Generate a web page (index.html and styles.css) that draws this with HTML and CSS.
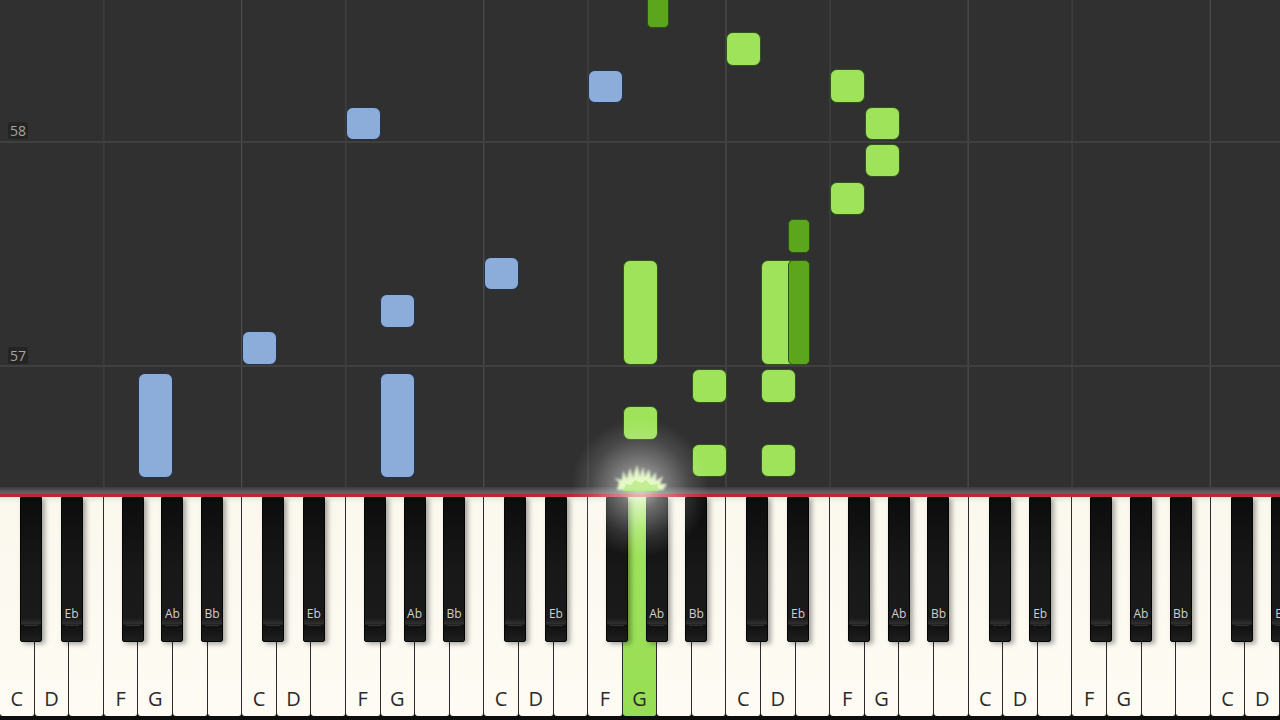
FILE: index.html
```html
<!DOCTYPE html>
<html lang="en">
<head>
    <meta charset="UTF-8">
    <meta name="viewport" content="width=device-width, initial-scale=1.0">
    <title>Piano Roll</title>
    <link rel="stylesheet" href="styles.css">
</head>
<body>
    <div class="stage">
        <!-- falling notes -->
        <div class="roll">
            <span class="measure m58">58</span>
            <span class="measure m57">57</span>

            <div class="note lh" style="left:346px;top:107px;height:33px"></div>
            <div class="note lh" style="left:588px;top:70px;height:33px"></div>
            <div class="note lh" style="left:484px;top:257px;height:33px"></div>
            <div class="note lh" style="left:380px;top:294px;height:34px"></div>
            <div class="note lh" style="left:242px;top:331px;height:34px"></div>
            <div class="note lh" style="left:138px;top:373px;height:105px"></div>
            <div class="note lh" style="left:380px;top:373px;height:105px"></div>

            <div class="note rh" style="left:726px;top:32px;height:34px"></div>
            <div class="note rh" style="left:830px;top:69px;height:34px"></div>
            <div class="note rh" style="left:865px;top:107px;height:33px"></div>
            <div class="note rh" style="left:865px;top:144px;height:33px"></div>
            <div class="note rh" style="left:830px;top:182px;height:33px"></div>
            <div class="note rh" style="left:623px;top:260px;height:105px"></div>
            <div class="note rh" style="left:761px;top:260px;height:105px"></div>
            <div class="note rh" style="left:692px;top:369px;height:34px"></div>
            <div class="note rh" style="left:761px;top:369px;height:34px"></div>
            <div class="note rh" style="left:623px;top:406px;height:34px"></div>
            <div class="note rh" style="left:692px;top:444px;height:33px"></div>
            <div class="note rh" style="left:761px;top:444px;height:33px"></div>

            <div class="note rh sharp" style="left:647px;top:-10px;height:38px"></div>
            <div class="note rh sharp" style="left:788px;top:219px;height:34px"></div>
            <div class="note rh sharp" style="left:788px;top:260px;height:105px"></div>
        </div>

        <div class="rail"></div>

        <!-- keyboard -->
        <div class="keys">
            <div class="wk"><span>C</span><i class="bk cs"></i></div>
            <div class="wk"><span>D</span><i class="bk eb"><b>Eb</b></i></div>
            <div class="wk"></div>
            <div class="wk"><span>F</span><i class="bk fs"></i></div>
            <div class="wk"><span>G</span><i class="bk ab"><b>Ab</b></i></div>
            <div class="wk"><i class="bk bb"><b>Bb</b></i></div>
            <div class="wk"></div>

            <div class="wk"><span>C</span><i class="bk cs"></i></div>
            <div class="wk"><span>D</span><i class="bk eb"><b>Eb</b></i></div>
            <div class="wk"></div>
            <div class="wk"><span>F</span><i class="bk fs"></i></div>
            <div class="wk"><span>G</span><i class="bk ab"><b>Ab</b></i></div>
            <div class="wk"><i class="bk bb"><b>Bb</b></i></div>
            <div class="wk"></div>

            <div class="wk"><span>C</span><i class="bk cs"></i></div>
            <div class="wk"><span>D</span><i class="bk eb"><b>Eb</b></i></div>
            <div class="wk"></div>
            <div class="wk"><span>F</span><i class="bk fs"></i></div>
            <div class="wk on"><span>G</span><i class="bk ab"><b>Ab</b></i></div>
            <div class="wk"><i class="bk bb"><b>Bb</b></i></div>
            <div class="wk"></div>

            <div class="wk"><span>C</span><i class="bk cs"></i></div>
            <div class="wk"><span>D</span><i class="bk eb"><b>Eb</b></i></div>
            <div class="wk"></div>
            <div class="wk"><span>F</span><i class="bk fs"></i></div>
            <div class="wk"><span>G</span><i class="bk ab"><b>Ab</b></i></div>
            <div class="wk"><i class="bk bb"><b>Bb</b></i></div>
            <div class="wk"></div>

            <div class="wk"><span>C</span><i class="bk cs"></i></div>
            <div class="wk"><span>D</span><i class="bk eb"><b>Eb</b></i></div>
            <div class="wk"></div>
            <div class="wk"><span>F</span><i class="bk fs"></i></div>
            <div class="wk"><span>G</span><i class="bk ab"><b>Ab</b></i></div>
            <div class="wk"><i class="bk bb"><b>Bb</b></i></div>
            <div class="wk"></div>

            <div class="wk"><span>C</span><i class="bk cs"></i></div>
            <div class="wk"><span>D</span><i class="bk eb"><b>Eb</b></i></div>
        </div>

        <!-- hit sparkle over the pressed key -->
        <div class="glow"></div>
        <svg class="spark" width="60" height="30" viewBox="0 0 60 30">
            <defs>
                <filter id="soft"><feGaussianBlur stdDeviation="0.8"/></filter>
            </defs>
            <polygon filter="url(#soft)" fill="#e4f8c8" points="6,28 8,20 3,16 11,18 12,9 16,17 19,6 22,16 26,3 29,15 32,5 34,15 38,7 40,17 45,10 45,19 52,14 49,22 56,22 52,28"/>
            <polygon fill="#bdea86" opacity="0.8" points="12,29 15,22 20,23 24,18 30,21 35,18 40,23 46,22 48,29"/>
        </svg>
    </div>
</body>
</html>
```

FILE: styles.css
```css
* {
    margin: 0;
    padding: 0;
    box-sizing: border-box;
}

body {
    background: #0e0e0e;
    font-family: 'Open Sans', 'Noto Sans', sans-serif;
    overflow: hidden;
}

.stage {
    position: relative;
    width: 1280px;
    height: 720px;
    display: flex;
    flex-direction: column;
}

/* grid: dim line on E|F, light line on B|C, two bar lines */
.roll {
    position: relative;
    height: 487px;
    overflow: hidden;
    background-color: #303030;
    background-image:
        linear-gradient(to bottom, transparent 141px, #404040 141px, #404040 143px, transparent 143px,
                        transparent 365px, #404040 365px, #404040 367px, transparent 367px),
        linear-gradient(to right, transparent 103px, #3b3b3b 103px, #3b3b3b 105px, transparent 105px,
                        transparent 241px, #535353 241px, #535353 243px, transparent 243px);
    background-size: 100% 100%, 242.162px 100%;
    background-repeat: no-repeat, repeat-x;
}

.measure {
    position: absolute;
    left: 8px;
    padding: 0 2px;
    font-size: 14px;
    line-height: 17px;
    color: #a5a5a5;
    background: #242424;
    border-radius: 3px;
}

.m58 { top: 122px; }
.m57 { top: 347px; }

.note {
    position: absolute;
    width: 35px;
    border-radius: 7px;
    border: 1px solid rgba(0, 0, 0, 0.55);
}

.note.lh {
    background: #8cadda;
    border-color: #23324a;
}

.note.rh {
    background: #9fe35b;
    border-color: #31521a;
}

.note.rh.sharp {
    width: 22px;
    background: #5ba61d;
    border-color: #2c5410;
    border-radius: 5px;
}

.rail {
    height: 10px;
    background: linear-gradient(to bottom, #3a3a3a 0, #585858 4px, #666 7px, #b3262b 7px, #c02c30 10px);
}

.keys {
    display: flex;
    align-items: flex-start;
    height: 223px;
    background: #0e0e0e;
    overflow: hidden;
}

.wk {
    position: relative;
    flex: 1 1 0;
    height: 219px;
    display: flex;
    align-items: flex-end;
    justify-content: center;
    padding-bottom: 7px;
    background: linear-gradient(to bottom, #e9e6dc 0, #fbf8ee 6px, #fdfbf3 100%);
    border-right: 1px solid #2b2b2b;
    border-radius: 0 0 3px 3px;
}

.wk span {
    font-size: 20px;
    line-height: 1;
    color: #2b2b2b;
}

.wk.on {
    background: linear-gradient(to bottom, #b6ec82 0, #9fe35b 30px, #98de55 100%);
}

.bk {
    position: absolute;
    top: 0;
    z-index: 2;
    width: 22px;
    height: 145px;
    display: flex;
    justify-content: center;
    align-items: flex-end;
    padding-bottom: 21px;
    font-style: normal;
    background: linear-gradient(to bottom, #0c0c0c 0, #181818 50%, #1a1a1a 84%, #303030 88%, #111 89%, #1e1e1e 100%);
    border: 1px solid #050505;
    border-radius: 0 0 2px 2px;
    box-shadow: 3px 2px 5px rgba(0, 0, 0, 0.35);
}

.bk::after {
    content: "";
    position: absolute;
    left: 3px;
    right: 3px;
    bottom: 15px;
    height: 1px;
    background: #4a4a4a;
    opacity: 0.6;
}

.bk b {
    position: relative;
    z-index: 1;
    font-weight: normal;
    font-size: 12px;
    line-height: 1;
    color: #d0d0d0;
}

.cs { left: 20px; }
.eb { left: 26px; }
.fs { left: 18px; }
.ab { left: 23px; }
.bb { left: 28px; }

.glow {
    position: absolute;
    left: 570px;
    top: 418px;
    width: 140px;
    height: 140px;
    border-radius: 50%;
    background: radial-gradient(circle, rgba(255, 255, 255, 0.75) 0, rgba(255, 255, 255, 0.4) 22%, rgba(255, 255, 255, 0.12) 50%, rgba(255, 255, 255, 0) 70%);
    pointer-events: none;
    z-index: 3;
}

.spark {
    position: absolute;
    left: 611px;
    top: 462px;
    z-index: 4;
}
```
